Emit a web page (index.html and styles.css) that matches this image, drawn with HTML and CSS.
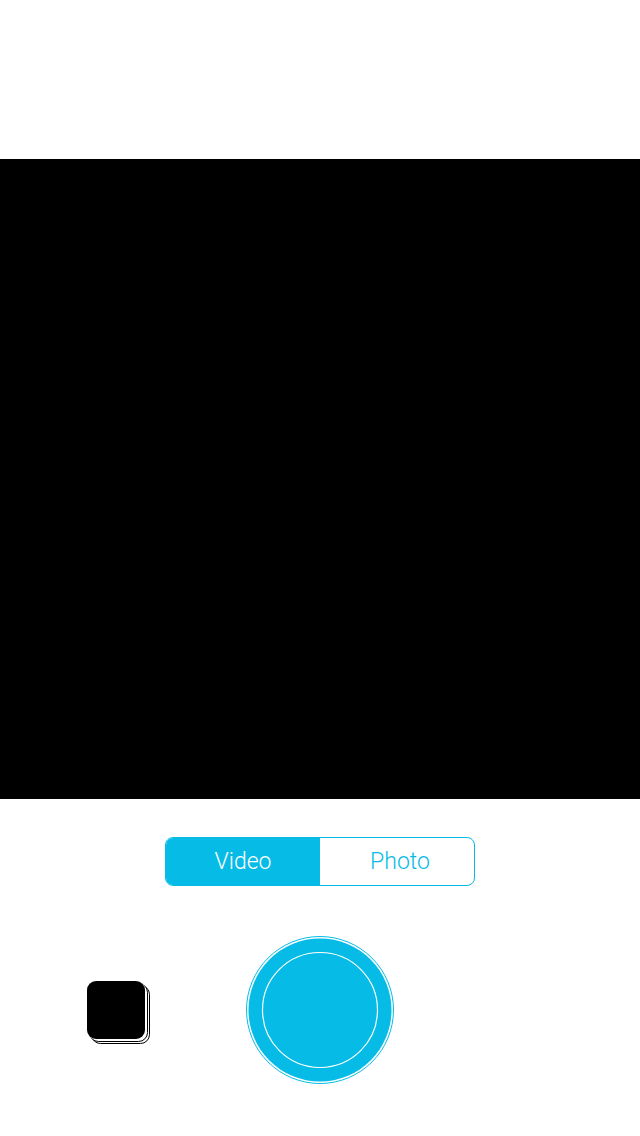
FILE: index.html
```html
<!DOCTYPE html>
<html>
<head>
<meta charset="utf-8">
<link rel="stylesheet" href="styles.css">
</head>
<body>
<div class="screen">
  <div class="top"></div>
  <div class="viewfinder"></div>
  <div class="controls">
    <div class="segmented">
      <div class="seg seg-active">Video</div>
      <div class="seg seg-right">Photo</div>
    </div>
    <div class="shutter-row">
      <div class="thumb">
        <svg width="66" height="66" viewBox="0 0 66 66">
          <rect x="4.5" y="4.5" width="58" height="58" rx="9" fill="none" stroke="#000" stroke-width="1"/>
          <rect x="3" y="3" width="58" height="58" rx="9" fill="#fff"/>
          <rect x="2.5" y="2.5" width="58" height="58" rx="9" fill="none" stroke="#000" stroke-width="1"/>
          <rect x="1" y="1" width="58" height="58" rx="9" fill="#fff"/>
          <rect x="0" y="0" width="58" height="58" rx="9" fill="#000"/>
        </svg>
      </div>
      <div class="shutter">
        <svg width="148" height="148" viewBox="0 0 148 148">
          <circle cx="74" cy="74" r="73.5" fill="none" stroke="#06bce6" stroke-width="1"/>
          <circle cx="74" cy="74" r="71.5" fill="#06bce6"/>
          <circle cx="74" cy="74" r="57.5" fill="none" stroke="#fff" stroke-width="1.2"/>
        </svg>
      </div>
      <div class="spacer"></div>
    </div>
  </div>
</div>
</body>
</html>
```
FILE: styles.css
```css
html, body {
  margin: 0;
  padding: 0;
  background: #fff;
}
.screen {
  width: 640px;
  height: 1136px;
  display: flex;
  flex-direction: column;
  font-family: "Roboto", "Liberation Sans", sans-serif;
}
.top {
  height: 159px;
}
.viewfinder {
  height: 640px;
  background: #000;
}
.controls {
  display: flex;
  flex-direction: column;
  align-items: center;
  padding-top: 38px;
}
.segmented {
  display: grid;
  grid-template-columns: 1fr 1fr;
  width: 310px;
  height: 49px;
  box-sizing: border-box;
  border: 1px solid #06bce6;
  border-radius: 8px;
  overflow: hidden;
}
.seg {
  display: flex;
  align-items: center;
  justify-content: center;
  font-size: 23px;
  font-weight: 300;
  color: #06bce6;
  padding-bottom: 1px;
}
.seg-right {
  padding-left: 6px;
}
.seg-active {
  background: #06bce6;
  color: #fff;
}
.shutter-row {
  width: 640px;
  margin-top: 50px;
  display: grid;
  grid-template-columns: 1fr auto 1fr;
  align-items: center;
}
.thumb {
  justify-self: start;
  margin-left: 87px;
  height: 66px;
  margin-top: 8px;
}
.thumb svg, .shutter svg {
  display: block;
}
.shutter {
  width: 148px;
  height: 148px;
}
```
